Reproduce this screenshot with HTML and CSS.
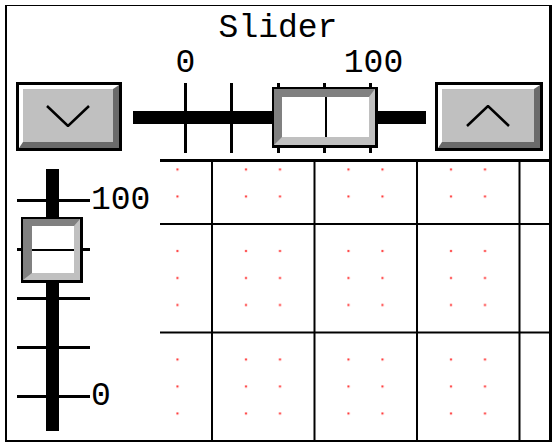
FILE: index.html
```html
<!DOCTYPE html>
<html lang="en">
<head>
    <meta charset="UTF-8">
    <meta name="viewport" content="width=device-width, initial-scale=1.0">
    <title>Slider</title>
    <link rel="stylesheet" href="styles.css">
</head>
<body>
    <div class="frame">
        <div class="top-panel">
            <div class="title">Slider</div>
            <div class="control-row">
                <button class="step-btn down" type="button">
                    <span class="step-face">
                        <svg width="44" height="22" viewBox="0 0 44 22"><polyline points="1,1 22,21 43,1" fill="none" stroke="#000" stroke-width="2.5"/></svg>
                    </span>
                </button>

                <div class="hslider">
                    <div class="hs-scale">
                        <span class="scale-label">0</span>
                        <span class="scale-label">100</span>
                    </div>
                    <div class="hs-track">
                        <div class="hs-bar"></div>
                        <div class="hs-ticks">
                            <span class="tick"></span>
                            <span class="tick"></span>
                            <span class="tick"></span>
                            <span class="tick"></span>
                            <span class="tick"></span>
                        </div>
                        <div class="thumb hs-thumb">
                            <div class="thumb-face"><span class="thumb-mark"></span></div>
                        </div>
                    </div>
                </div>

                <button class="step-btn up" type="button">
                    <span class="step-face">
                        <svg width="44" height="22" viewBox="0 0 44 22"><polyline points="1,21 22,1 43,21" fill="none" stroke="#000" stroke-width="2.5"/></svg>
                    </span>
                </button>
            </div>
        </div>

        <div class="bottom-area">
            <div class="vslider">
                <div class="vs-bar"></div>
                <div class="vs-ticks">
                    <div class="vs-tick"><span class="vs-line"></span><span class="vs-label">100</span></div>
                    <div class="vs-tick"><span class="vs-line"></span></div>
                    <div class="vs-tick"><span class="vs-line"></span></div>
                    <div class="vs-tick"><span class="vs-line"></span></div>
                    <div class="vs-tick"><span class="vs-line"></span><span class="vs-label">0</span></div>
                </div>
                <div class="thumb vs-thumb">
                    <div class="thumb-face"><span class="thumb-mark"></span></div>
                </div>
            </div>

            <svg class="graph" width="389" height="281" viewBox="0 0 389 281">
                <defs>
                    <pattern id="grid" patternUnits="userSpaceOnUse" x="51" y="64" width="102.5" height="108.5">
                        <rect x="34" y="27" width="2" height="2" fill="#ff2a2a"/>
                        <rect x="68" y="27" width="2" height="2" fill="#ff2a2a"/>
                        <rect x="34" y="54" width="2" height="2" fill="#ff2a2a"/>
                        <rect x="68" y="54" width="2" height="2" fill="#ff2a2a"/>
                        <rect x="34" y="81" width="2" height="2" fill="#ff2a2a"/>
                        <rect x="68" y="81" width="2" height="2" fill="#ff2a2a"/>
                        <rect x="0" y="0" width="2" height="108.5" fill="#000"/>
                        <rect x="0" y="0" width="102.5" height="2" fill="#000"/>
                    </pattern>
                </defs>
                <rect x="0" y="0" width="389" height="281" fill="url(#grid)"/>
                <rect x="0" y="0" width="389" height="3" fill="#000"/>
            </svg>
        </div>
    </div>
</body>
</html>
```

FILE: styles.css
```css
body {
    margin: 0;
    background: #fff;
    font-family: "Liberation Mono", "DejaVu Sans Mono", monospace;
    font-size: 33px;
    color: #000;
}

.frame {
    margin: 5px 0 0 5px;
    width: 542px;
    border-style: solid;
    border-color: #000;
    border-width: 1px 3px 2px 2px;
}

/* top part: title + horizontal slider */
.top-panel {
    height: 153px;
    padding-top: 6px;
    box-sizing: border-box;
}

.title {
    height: 33px;
    line-height: 33px;
    text-align: center;
}

.control-row {
    display: flex;
    align-items: flex-end;
    padding: 0 6px 0 9px;
}

.step-btn {
    display: block;
    padding: 0;
    margin: 0 0 2px 0;
    height: 69px;
    border: 3px solid #000;
    background: #c0c0c0;
    box-sizing: border-box;
}

.step-btn.down {
    width: 106px;
}

.step-btn.up {
    width: 108px;
}

.step-face {
    display: flex;
    align-items: center;
    justify-content: center;
    height: 100%;
    box-sizing: border-box;
    border-style: solid;
    border-width: 4px 6px 6px 4px;
    border-color: #fff #6a6a6a #6a6a6a #fff;
}

.step-face svg {
    display: block;
}

.hslider {
    flex: 1;
}

.hs-scale {
    display: flex;
    justify-content: space-between;
    width: 191px;
    margin: 2px 0 0 62px;
    height: 33px;
    line-height: 33px;
}

.scale-label {
    width: 3px;
    display: flex;
    justify-content: center;
    white-space: nowrap;
}

.hs-track {
    display: grid;
    height: 71px;
    margin-top: 2px;
}

.hs-track > * {
    grid-area: 1 / 1;
}

.hs-bar {
    height: 13px;
    margin: 29px 9px 0 11px;
    background: #000;
}

.hs-ticks {
    display: flex;
    justify-content: space-between;
    width: 188px;
    height: 70px;
    margin: 1px 0 0 62px;
}

.tick {
    width: 3px;
    background: #000;
}

/* slider thumbs */
.thumb {
    border-style: solid;
    border-color: #000;
    border-width: 2px 3px 3px 2px;
    justify-self: start;
    align-self: start;
}

.thumb-face {
    display: flex;
    justify-content: center;
    align-items: center;
    background: #fff;
    border-style: solid;
    border-color: #808080 #c0c0c0 #c0c0c0 #808080;
}

.hs-thumb {
    margin: 5px 0 0 150px;
}

.hs-thumb .thumb-face {
    width: 87px;
    height: 40px;
    border-width: 8px 6px 8px 8px;
}

.hs-thumb .thumb-mark {
    width: 2px;
    height: 100%;
    background: #000;
}

/* bottom part: vertical slider + graph */
.bottom-area {
    display: flex;
    height: 281px;
}

.vslider {
    width: 153px;
    display: grid;
}

.vslider > * {
    grid-area: 1 / 1;
}

.vs-bar {
    width: 13px;
    height: 262px;
    margin: 10px 0 0 39px;
    background: #000;
    justify-self: start;
    align-self: start;
}

.vs-ticks {
    display: flex;
    flex-direction: column;
    justify-content: space-between;
    height: 199px;
    margin: 40px 0 0 10px;
    align-self: start;
}

.vs-tick {
    display: flex;
    align-items: center;
    height: 3px;
}

.vs-line {
    width: 73px;
    height: 3px;
    background: #000;
}

.vs-label {
    margin-left: 1px;
    line-height: 33px;
}

.vs-thumb {
    margin: 58px 0 0 14px;
}

.vs-thumb .thumb-face {
    width: 42px;
    height: 47px;
    border-width: 7px 6px 7px 9px;
}

.vs-thumb .thumb-mark {
    width: 100%;
    height: 2px;
    background: #000;
}

.graph {
    display: block;
}
```
